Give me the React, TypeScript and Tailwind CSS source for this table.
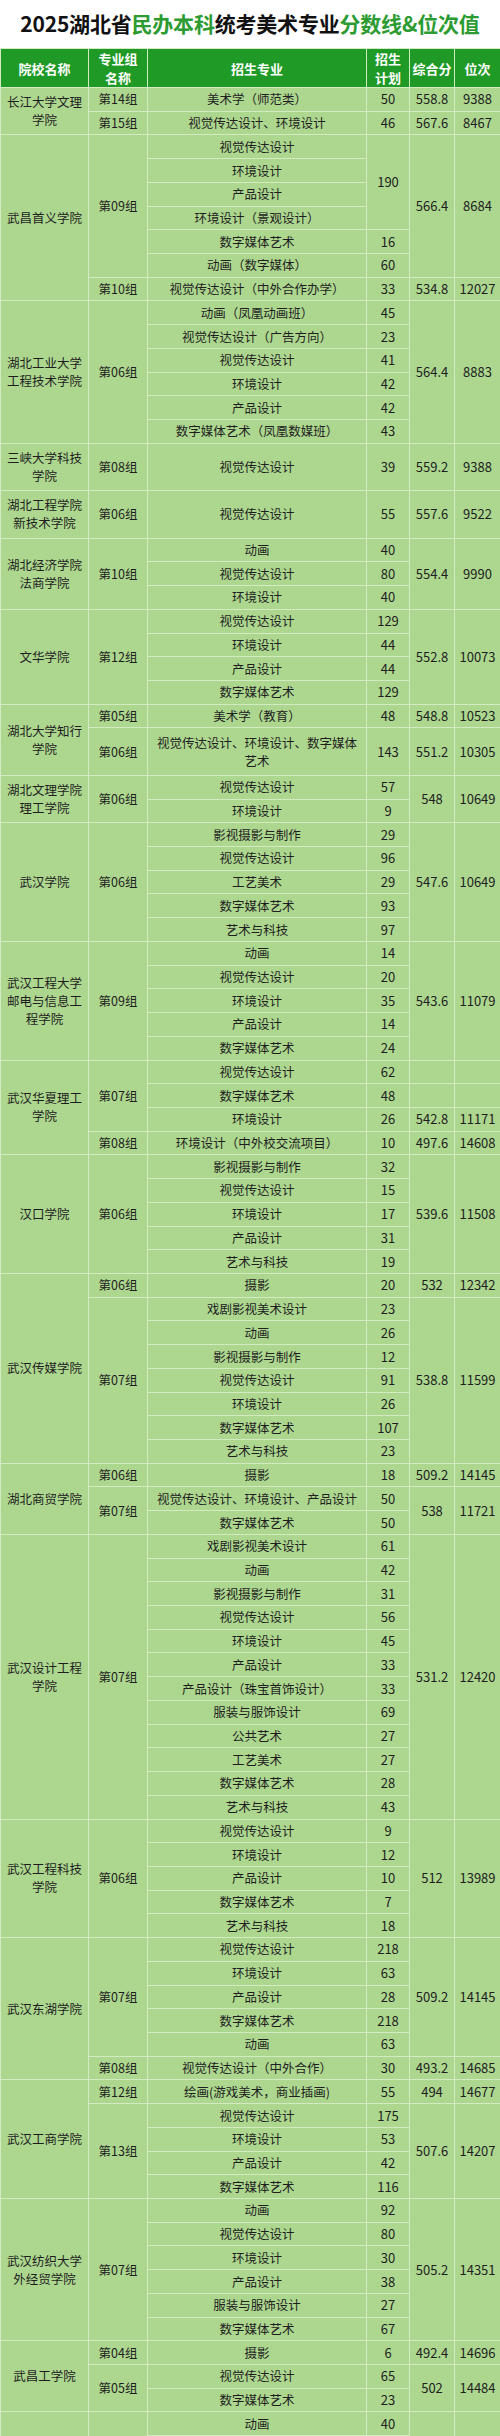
import React from 'react';

type Row = {
  school?: string[];
  ss?: number;
  group?: string;
  gs?: number;
  major: string[];
  plan?: string;
  ps?: number;
  score?: string;
  rank?: string;
  cs?: number;
  tall?: boolean;
};

const m = (s: string) => [s];

const rows: Row[] = [
  { school: ['长江大学文理', '学院'], ss: 2, group: '第14组', major: m('美术学（师范类）'), plan: '50', score: '558.8', rank: '9388' },
  { group: '第15组', major: m('视觉传达设计、环境设计'), plan: '46', score: '567.6', rank: '8467' },

  { school: ['武昌首义学院'], ss: 7, group: '第09组', gs: 6, major: m('视觉传达设计'), plan: '190', ps: 4, score: '566.4', rank: '8684', cs: 6 },
  { major: m('环境设计') },
  { major: m('产品设计') },
  { major: m('环境设计（景观设计）') },
  { major: m('数字媒体艺术'), plan: '16' },
  { major: m('动画（数字媒体）'), plan: '60' },
  { group: '第10组', major: m('视觉传达设计（中外合作办学）'), plan: '33', score: '534.8', rank: '12027' },

  { school: ['湖北工业大学', '工程技术学院'], ss: 6, group: '第06组', gs: 6, major: m('动画（凤凰动画班）'), plan: '45', score: '564.4', rank: '8883', cs: 6 },
  { major: m('视觉传达设计（广告方向）'), plan: '23' },
  { major: m('视觉传达设计'), plan: '41' },
  { major: m('环境设计'), plan: '42' },
  { major: m('产品设计'), plan: '42' },
  { major: m('数字媒体艺术（凤凰数媒班）'), plan: '43' },

  { school: ['三峡大学科技', '学院'], group: '第08组', major: m('视觉传达设计'), plan: '39', score: '559.2', rank: '9388', tall: true },
  { school: ['湖北工程学院', '新技术学院'], group: '第06组', major: m('视觉传达设计'), plan: '55', score: '557.6', rank: '9522', tall: true },

  { school: ['湖北经济学院', '法商学院'], ss: 3, group: '第10组', gs: 3, major: m('动画'), plan: '40', score: '554.4', rank: '9990', cs: 3 },
  { major: m('视觉传达设计'), plan: '80' },
  { major: m('环境设计'), plan: '40' },

  { school: ['文华学院'], ss: 4, group: '第12组', gs: 4, major: m('视觉传达设计'), plan: '129', score: '552.8', rank: '10073', cs: 4 },
  { major: m('环境设计'), plan: '44' },
  { major: m('产品设计'), plan: '44' },
  { major: m('数字媒体艺术'), plan: '129' },

  { school: ['湖北大学知行', '学院'], ss: 2, group: '第05组', major: m('美术学（教育）'), plan: '48', score: '548.8', rank: '10523' },
  { group: '第06组', major: ['视觉传达设计、环境设计、数字媒体', '艺术'], plan: '143', score: '551.2', rank: '10305', tall: true },

  { school: ['湖北文理学院', '理工学院'], ss: 2, group: '第06组', gs: 2, major: m('视觉传达设计'), plan: '57', score: '548', rank: '10649', cs: 2 },
  { major: m('环境设计'), plan: '9' },

  { school: ['武汉学院'], ss: 5, group: '第06组', gs: 5, major: m('影视摄影与制作'), plan: '29', score: '547.6', rank: '10649', cs: 5 },
  { major: m('视觉传达设计'), plan: '96' },
  { major: m('工艺美术'), plan: '29' },
  { major: m('数字媒体艺术'), plan: '93' },
  { major: m('艺术与科技'), plan: '97' },

  { school: ['武汉工程大学', '邮电与信息工', '程学院'], ss: 5, group: '第09组', gs: 5, major: m('动画'), plan: '14', score: '543.6', rank: '11079', cs: 5 },
  { major: m('视觉传达设计'), plan: '20' },
  { major: m('环境设计'), plan: '35' },
  { major: m('产品设计'), plan: '14' },
  { major: m('数字媒体艺术'), plan: '24' },

  { school: ['武汉华夏理工', '学院'], ss: 4, group: '第07组', gs: 3, major: m('视觉传达设计'), plan: '62', score: '', rank: '' },
  { major: m('数字媒体艺术'), plan: '48', score: '', rank: '' },
  { major: m('环境设计'), plan: '26', score: '542.8', rank: '11171' },
  { group: '第08组', major: m('环境设计（中外校交流项目）'), plan: '10', score: '497.6', rank: '14608' },

  { school: ['汉口学院'], ss: 5, group: '第06组', gs: 5, major: m('影视摄影与制作'), plan: '32', score: '539.6', rank: '11508', cs: 5 },
  { major: m('视觉传达设计'), plan: '15' },
  { major: m('环境设计'), plan: '17' },
  { major: m('产品设计'), plan: '31' },
  { major: m('艺术与科技'), plan: '19' },

  { school: ['武汉传媒学院'], ss: 8, group: '第06组', major: m('摄影'), plan: '20', score: '532', rank: '12342' },
  { group: '第07组', gs: 7, major: m('戏剧影视美术设计'), plan: '23', score: '538.8', rank: '11599', cs: 7 },
  { major: m('动画'), plan: '26' },
  { major: m('影视摄影与制作'), plan: '12' },
  { major: m('视觉传达设计'), plan: '91' },
  { major: m('环境设计'), plan: '26' },
  { major: m('数字媒体艺术'), plan: '107' },
  { major: m('艺术与科技'), plan: '23' },

  { school: ['湖北商贸学院'], ss: 3, group: '第06组', major: m('摄影'), plan: '18', score: '509.2', rank: '14145' },
  { group: '第07组', gs: 2, major: m('视觉传达设计、环境设计、产品设计'), plan: '50', score: '538', rank: '11721', cs: 2 },
  { major: m('数字媒体艺术'), plan: '50' },

  { school: ['武汉设计工程', '学院'], ss: 12, group: '第07组', gs: 12, major: m('戏剧影视美术设计'), plan: '61', score: '531.2', rank: '12420', cs: 12 },
  { major: m('动画'), plan: '42' },
  { major: m('影视摄影与制作'), plan: '31' },
  { major: m('视觉传达设计'), plan: '56' },
  { major: m('环境设计'), plan: '45' },
  { major: m('产品设计'), plan: '33' },
  { major: m('产品设计（珠宝首饰设计）'), plan: '33' },
  { major: m('服装与服饰设计'), plan: '69' },
  { major: m('公共艺术'), plan: '27' },
  { major: m('工艺美术'), plan: '27' },
  { major: m('数字媒体艺术'), plan: '28' },
  { major: m('艺术与科技'), plan: '43' },

  { school: ['武汉工程科技', '学院'], ss: 5, group: '第06组', gs: 5, major: m('视觉传达设计'), plan: '9', score: '512', rank: '13989', cs: 5 },
  { major: m('环境设计'), plan: '12' },
  { major: m('产品设计'), plan: '10' },
  { major: m('数字媒体艺术'), plan: '7' },
  { major: m('艺术与科技'), plan: '18' },

  { school: ['武汉东湖学院'], ss: 6, group: '第07组', gs: 5, major: m('视觉传达设计'), plan: '218', score: '509.2', rank: '14145', cs: 5 },
  { major: m('环境设计'), plan: '63' },
  { major: m('产品设计'), plan: '28' },
  { major: m('数字媒体艺术'), plan: '218' },
  { major: m('动画'), plan: '63' },
  { group: '第08组', major: m('视觉传达设计（中外合作）'), plan: '30', score: '493.2', rank: '14685' },

  { school: ['武汉工商学院'], ss: 5, group: '第12组', major: m('绘画(游戏美术，商业插画)'), plan: '55', score: '494', rank: '14677' },
  { group: '第13组', gs: 4, major: m('视觉传达设计'), plan: '175', score: '507.6', rank: '14207', cs: 4 },
  { major: m('环境设计'), plan: '53' },
  { major: m('产品设计'), plan: '42' },
  { major: m('数字媒体艺术'), plan: '116' },

  { school: ['武汉纺织大学', '外经贸学院'], ss: 6, group: '第07组', gs: 6, major: m('动画'), plan: '92', score: '505.2', rank: '14351', cs: 6 },
  { major: m('视觉传达设计'), plan: '80' },
  { major: m('环境设计'), plan: '30' },
  { major: m('产品设计'), plan: '38' },
  { major: m('服装与服饰设计'), plan: '27' },
  { major: m('数字媒体艺术'), plan: '67' },

  { school: ['武昌工学院'], ss: 3, group: '第04组', major: m('摄影'), plan: '6', score: '492.4', rank: '14696' },
  { group: '第05组', gs: 2, major: m('视觉传达设计'), plan: '65', score: '502', rank: '14484', cs: 2 },
  { major: m('数字媒体艺术'), plan: '23' },

  { school: [''], ss: 2, group: '', gs: 2, major: m('动画'), plan: '40', score: '', rank: '', cs: 2 },
  { major: m(''), plan: '' },
];

const cell = 'border border-[#d3ebc1] p-0 text-center align-middle';

export default function App() {
  return (
    <div className="w-[500px] bg-white text-[#1e1e1e] [font-family:'Noto_Sans_CJK_SC','Noto_Sans',sans-serif]">
      <h1 className="flex h-12 items-center justify-center text-[21px] font-bold tracking-[-0.2px] text-[#111]">
        2025湖北省<span className="text-[#2c9b32]">民办本科</span>统考美术专业
        <span className="text-[#2c9b32]">分数线&amp;位次值</span>
      </h1>

      <table className="w-full table-fixed border-collapse bg-[#add78f] text-[12.5px] leading-[18px]">
        <colgroup>
          <col className="w-[88px]" />
          <col className="w-[59px]" />
          <col className="w-[219px]" />
          <col className="w-[43px]" />
          <col className="w-[45px]" />
          <col className="w-[46px]" />
        </colgroup>
        <thead>
          <tr className="h-[38px] bg-[#1f9a26] text-[13px] font-bold leading-[19px] text-white">
            <th className={cell}>院校名称</th>
            <th className={cell}>
              专业组
              <br />
              名称
            </th>
            <th className={cell}>招生专业</th>
            <th className={cell}>
              招生
              <br />
              计划
            </th>
            <th className={cell}>综合分</th>
            <th className={cell}>位次</th>
          </tr>
        </thead>
        <tbody>
          {rows.map((r, i) => (
            <tr key={i} className={r.tall ? 'h-[47.46px]' : 'h-[23.73px]'}>
              {r.school && (
                <td rowSpan={r.ss ?? 1} className={cell}>
                  {r.school.map((line, j) => (
                    <div key={j}>{line}</div>
                  ))}
                </td>
              )}
              {r.group !== undefined && (
                <td rowSpan={r.gs ?? 1} className={cell}>
                  {r.group}
                </td>
              )}
              <td className={`${cell} whitespace-nowrap`}>
                {r.major.map((line, j) => (
                  <div key={j}>{line}</div>
                ))}
              </td>
              {r.plan !== undefined && (
                <td rowSpan={r.ps ?? 1} className={`${cell} text-[13px]`}>
                  {r.plan}
                </td>
              )}
              {r.score !== undefined && (
                <td rowSpan={r.cs ?? 1} className={`${cell} text-[13px]`}>
                  {r.score}
                </td>
              )}
              {r.rank !== undefined && (
                <td rowSpan={r.cs ?? 1} className={`${cell} text-[13px]`}>
                  {r.rank}
                </td>
              )}
            </tr>
          ))}
        </tbody>
      </table>
    </div>
  );
}
